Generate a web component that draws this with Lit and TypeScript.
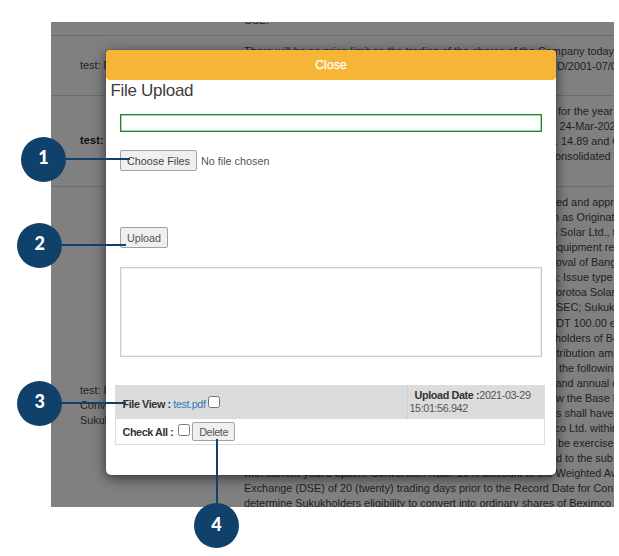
import { LitElement, html, css } from "lit";
import { customElement } from "lit/decorators.js";
import { styleMap } from "lit/directives/style-map.js";

type Line = { text: string; indent?: number };
type Row = { kind: string; label: string[]; lines: Line[] };

// indent: where a partly covered line resumes, measured from the left of its cell
const rows: Row[] = [
  { kind: "first", label: [], lines: [{ text: "CSE." }] },
  {
    kind: "second",
    label: ["test: F"],
    lines: [
      { text: "There will be no price limit on the trading of the shares of the Company today" },
      { text: "D/2001-07/0", indent: 313 },
    ],
  },
  {
    kind: "third",
    label: ["test:"],
    lines: [
      { text: "for the year", indent: 314 },
      { text: "24-Mar-202", indent: 315.5 },
      { text: ". 14.89 and C", indent: 311 },
      { text: "onsolidated T", indent: 311 },
    ],
  },
  {
    kind: "fourth",
    label: ["test: I", "Conv", "Sukuk"],
    lines: [
      { text: "ed and appr", indent: 312 },
      { text: "h as Originat", indent: 309 },
      { text: "a Solar Ltd., t", indent: 307 },
      { text: "equipment re", indent: 307 },
      { text: "oval of Bang", indent: 312 },
      { text: "a; Issue type", indent: 307 },
      { text: "orotoa Solar", indent: 312 },
      { text: "SEC; Sukuk", indent: 312 },
      { text: "BDT 100.00 e", indent: 305 },
      { text: "holders of Be", indent: 311 },
      { text: "tribution am", indent: 312.5 },
      { text: "the followin", indent: 315 },
      { text: "and annual c", indent: 311.5 },
      { text: "w the Base I", indent: 312 },
      { text: "s shall have", indent: 312 },
      { text: "co Ltd. within", indent: 310.5 },
      { text: "be exercise", indent: 314 },
      { text: "d to the sub", indent: 312 },
      { text: "with current year's option. Conversion Rate: 20% discount to the Weighted Av" },
      { text: "Exchange (DSE) of 20 (twenty) trading days prior to the Record Date for Con" },
      { text: "determine Sukukholders eligibility to convert into ordinary shares of Beximco" },
    ],
  },
];

@customElement("news-table")
export class NewsTable extends LitElement {
  static styles = css`
    :host {
      display: block;
      width: 563px;
      height: 485px;
      overflow: hidden;
      background: #808080;
      color: #1f1f1f;
      font: 10.87px/15.07px "Liberation Sans", Arial, sans-serif;
    }
    .row {
      display: grid;
      grid-template-columns: 193px 1fr;
      box-sizing: border-box;
      border-bottom: 1px solid #6d6d6d;
      white-space: nowrap;
    }
    .label { padding-left: 29px; align-self: center; }
    .lines { padding-top: 8px; min-width: 0; }
    .first { height: 14px; }
    .first .lines { padding: 0; margin-top: -9px; }
    .second { height: 60px; }
    .third { height: 91px; }
    .third .label { font-weight: bold; color: #111; letter-spacing: 0.2px; }
    .fourth { height: 336px; border: 0; }
    .fourth .label { align-self: start; padding-top: 196px; }
  `;
  render() {
    return rows.map(
      (r) => html`<div class="row ${r.kind}">
        <div class="label">${r.label.map((l) => html`<div>${l}</div>`)}</div>
        <div class="lines">
          ${r.lines.map(
            (l) => html`<div style=${styleMap({ paddingLeft: `${l.indent ?? 0}px` })}>${l.text}</div>`
          )}
        </div>
      </div>`
    );
  }
}

@customElement("upload-dialog")
export class UploadDialog extends LitElement {
  static styles = css`
    :host {
      display: flex;
      flex-direction: column;
      box-sizing: border-box;
      width: 450px;
      height: 425px;
      background: #fff;
      border-radius: 5px;
      box-shadow: 0 3px 13px rgba(0, 0, 0, 0.62), 0 0 1px #333;
      color: #333;
      font: 10.8px/14px "Liberation Sans", Arial, sans-serif;
    }
    .close {
      height: 30px;
      flex: none;
      border: 0;
      padding: 0;
      border-radius: 4px;
      background: #f7b538;
      color: #fff;
      font: 12px/30px "Liberation Sans", Arial, sans-serif;
      text-align: center;
      letter-spacing: 0.2px;
      -webkit-text-stroke: 0.25px #fff;
    }
    h1 {
      margin: 0 0 0 4.5px;
      font-size: 17px;
      letter-spacing: -0.3px;
      line-height: 22px;
      font-weight: normal;
      height: 34px;
      color: #3c3c3c;
    }
    .form { margin: 0 14px; display: flex; flex-direction: column; align-items: flex-start; }
    .progress {
      width: 422px;
      height: 18px;
      box-sizing: border-box;
      border: 1px solid #23852b;
      box-shadow: inset 0 0 0 0.5px #5faa64;
    }
    .btn {
      box-sizing: border-box;
      border: 1px solid #a2a2a2;
      border-radius: 2px;
      background: #efefef;
      color: #444;
      font: inherit;
      padding: 0;
      height: 21px;
    }
    .picker { display: flex; align-items: center; gap: 4px; margin-top: 18px; color: #555; }
    .choose { width: 77px; }
    .upload { width: 48px; margin-top: 56px; color: #555; }
    .log {
      box-sizing: border-box;
      width: 422px;
      height: 90px;
      border: 1px solid #ccc;
      margin-top: 18.5px;
      box-shadow: inset 0 0 0 0.5px #ddd;
    }
    .files {
      margin: 28px 0 0 9px;
      width: 429.5px;
      border: 1px solid #ddd;
      box-sizing: border-box;
      font-size: 10.8px;
      letter-spacing: -0.4px;
    }
    .file { display: grid; grid-template-columns: 291px 1fr; height: 33px; background: #dcdcdc; }
    .name { display: flex; align-items: center; padding: 4px 0 0 6.5px; box-sizing: border-box; }
    .date {
      border-left: 1px solid #d0d0d0;
      padding: 3px 0 0 1.5px;
      color: #555;
      line-height: 13.5px;
      white-space: nowrap;
    }
    .date b { color: #333; margin-left: 5px; letter-spacing: -0.37px; }
    .all { display: flex; align-items: center; height: 25px; padding: 1px 0 0 6.5px; box-sizing: border-box; }
    b { white-space: pre; }
    .link { color: #337ab7; }
    .check {
      width: 12px;
      height: 12px;
      box-sizing: border-box;
      border: 1px solid #767676;
      border-radius: 2.5px;
      background: #fff;
      margin-left: 2px;
      margin-top: -4px;
    }
    .delete { width: 43px; height: 19.5px; margin-left: 2px; color: #555; letter-spacing: -0.4px; }
  `;
  render() {
    return html`
      <button class="close">Close</button>
      <h1>File Upload</h1>
      <div class="form">
        <div class="progress"></div>
        <div class="picker"><button class="btn choose">Choose Files</button><span>No file chosen</span></div>
        <button class="btn upload">Upload</button>
        <div class="log"></div>
      </div>
      <div class="files">
        <div class="file">
          <div class="name"><b>File View : </b><span class="link">test.pdf</span><span class="check"></span></div>
          <div class="date"><b>Upload Date :</b>2021-03-29<br />15:01:56.942</div>
        </div>
        <div class="all"><b>Check All : </b><span class="check"></span><button class="btn delete">Delete</button></div>
      </div>
    `;
  }
}

@customElement("app-root")
export class AppRoot extends LitElement {
  static styles = css`
    :host { display: block; position: relative; width: 619px; height: 556px; background: #fff; overflow: hidden; }
    .page { padding: 22px 0 0 51px; }
    .dialog { position: absolute; left: 106px; top: 50px; }
    .pin { position: absolute; display: flex; align-items: center; }
    .dot {
      flex: none;
      width: 45px;
      height: 45px;
      box-sizing: border-box;
      padding-bottom: 4px;
      border-radius: 50%;
      background: #0f416b;
      color: #fff;
      display: flex;
      align-items: center;
      justify-content: center;
      font: 900 18px/20px Lato, sans-serif;
    }
    .stem { width: 64px; height: 2px; background: #0f416b; }
    .one { left: 21px; top: 136.5px; }
    .two { left: 17.3px; top: 222.5px; }
    .three { left: 17.3px; top: 380.8px; }
    .four { left: 194px; top: 439px; flex-direction: column-reverse; }
    .four .stem { width: 2px; height: 64px; }
  `;
  render() {
    return html`
      <div class="page"><news-table></news-table></div>
      <upload-dialog class="dialog"></upload-dialog>
      ${["one", "two", "three", "four"].map(
        (name, i) => html`<div class="pin ${name}"><span class="dot">${i + 1}</span><span class="stem"></span></div>`
      )}
    `;
  }
}
